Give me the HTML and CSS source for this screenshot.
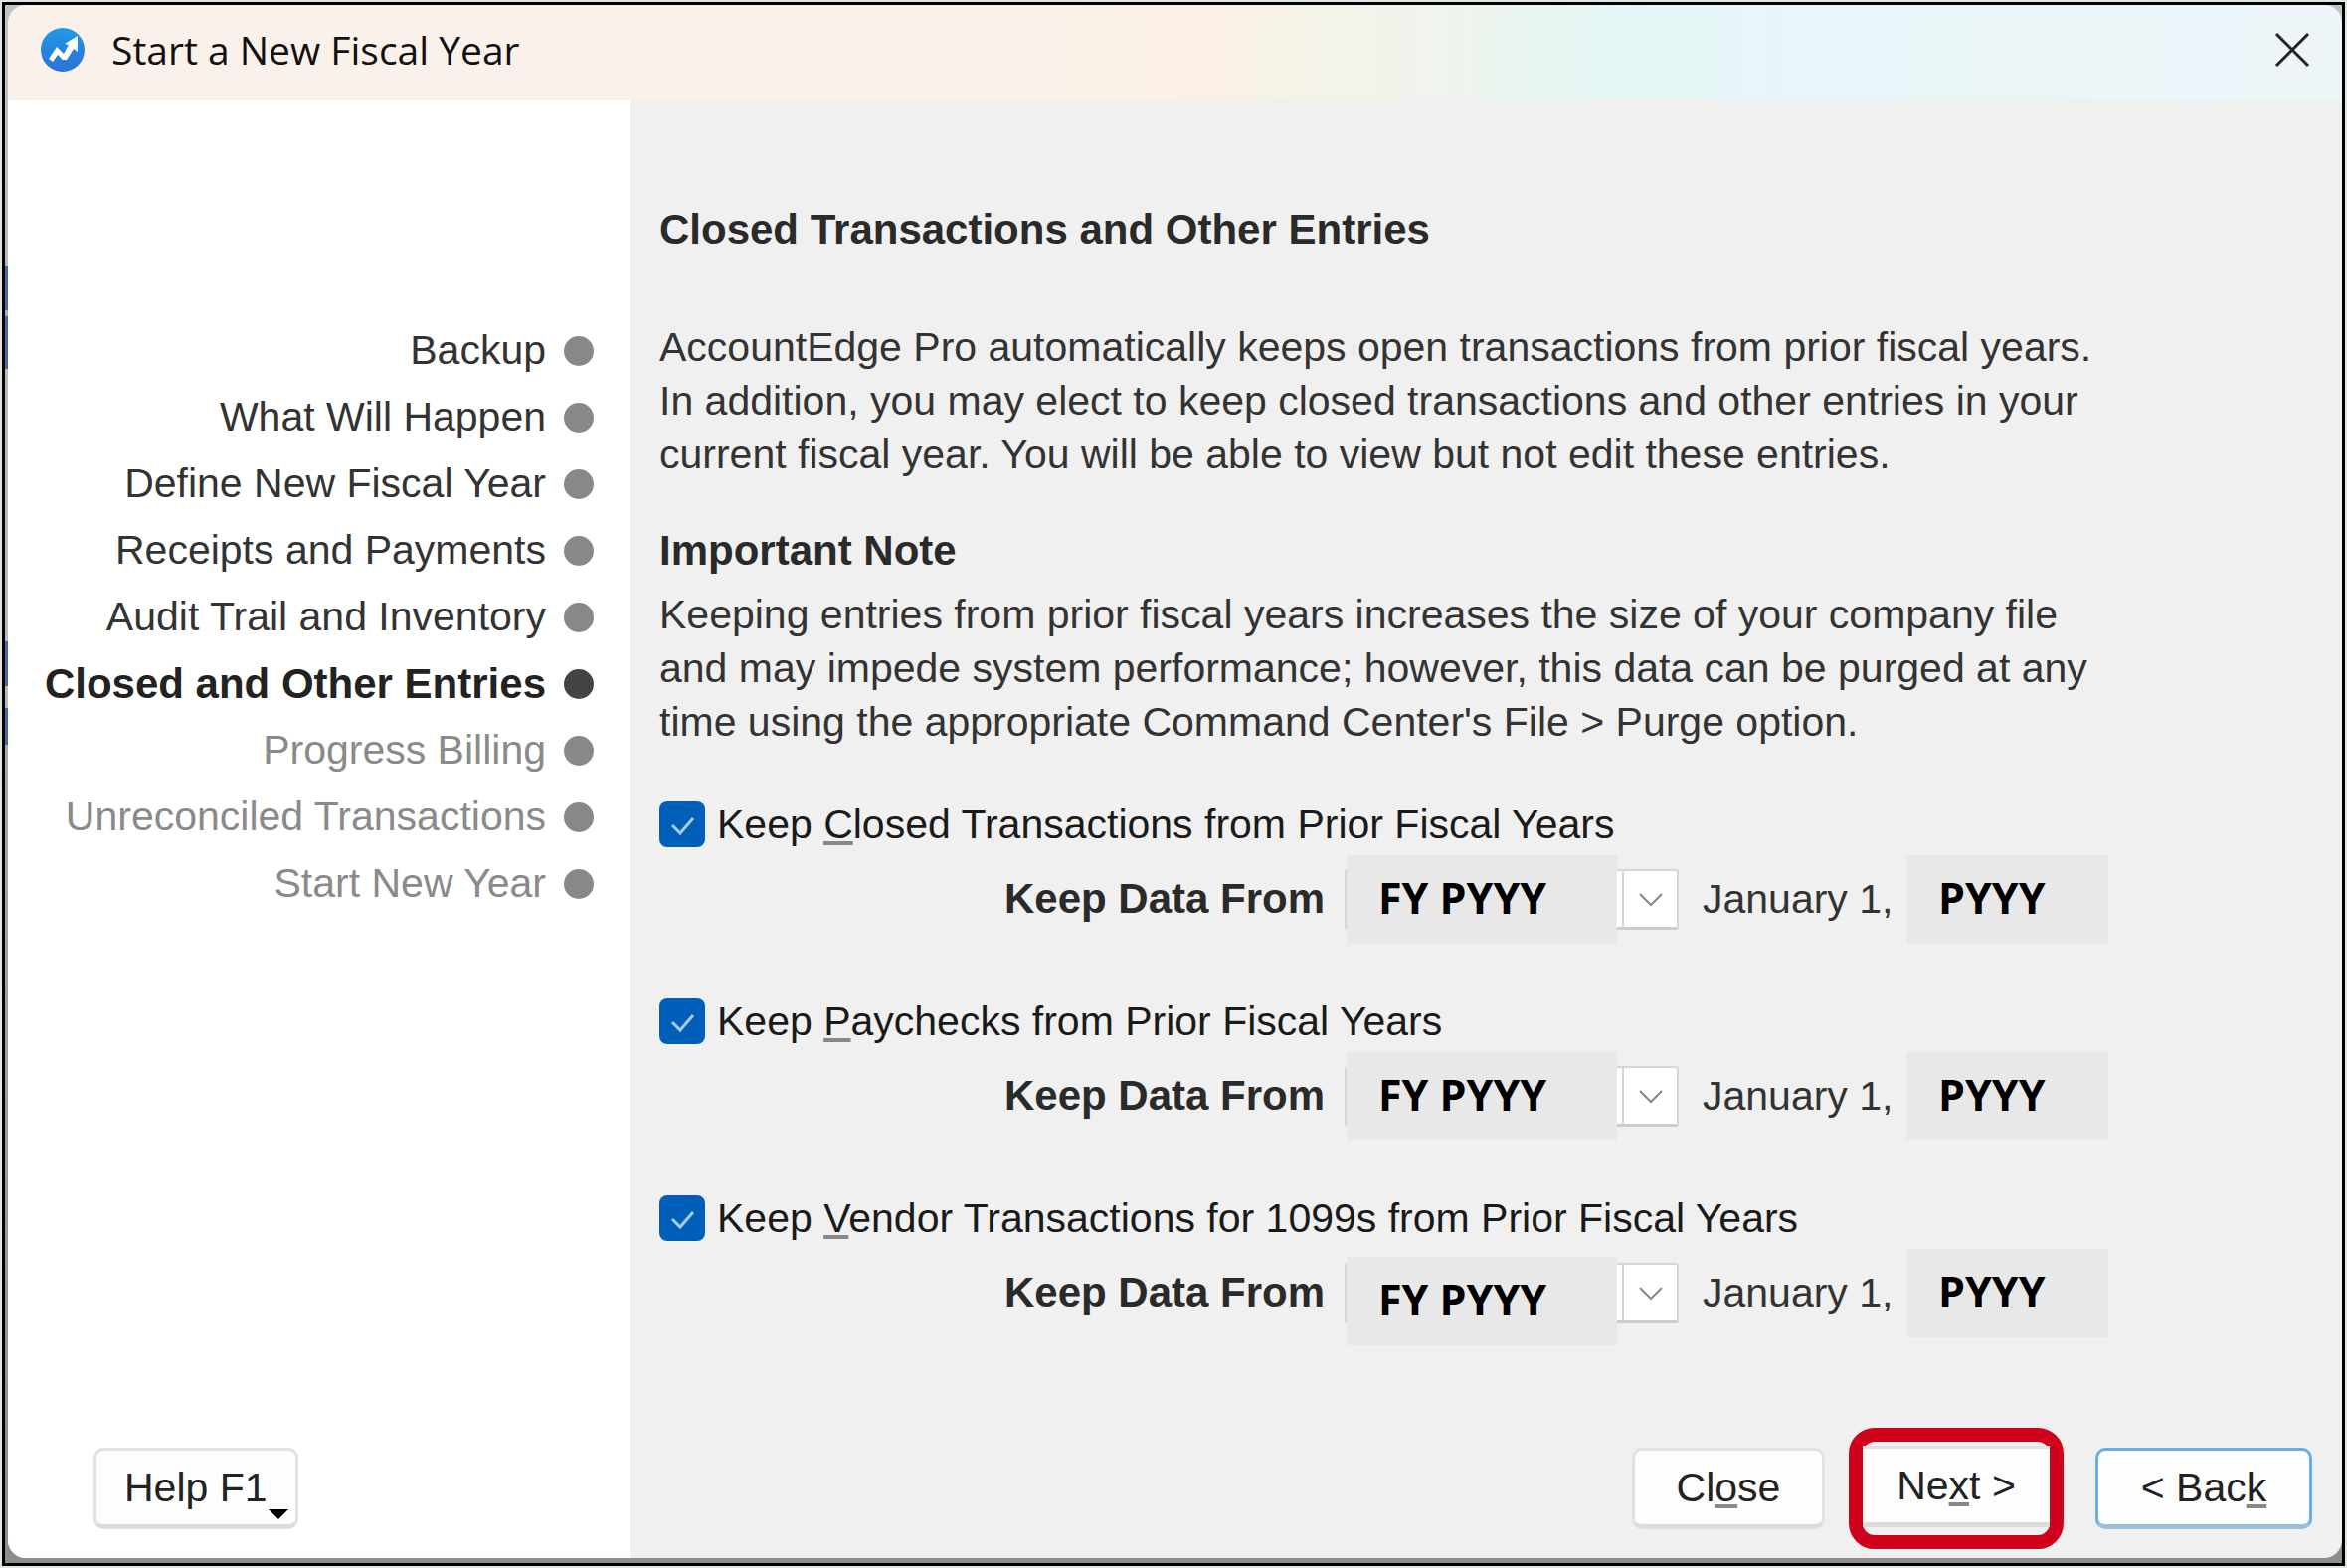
FILE: index.html
```
<!DOCTYPE html>
<html lang="en">
<head>
  <meta charset="UTF-8">
  <title>Start a New Fiscal Year</title>
  <meta name="viewport" content="width=device-width, initial-scale=1.0">
  <link rel="stylesheet" href="styles.css">
</head>
<body>
  <div class="window">
    <header class="titlebar">
      <svg class="logo" viewBox="0 0 46 46" aria-hidden="true">
        <defs>
          <linearGradient id="logoFill" x1="0" y1="0" x2="0" y2="1">
            <stop offset="0" stop-color="#1f9be6"/>
            <stop offset="1" stop-color="#2f6fd6"/>
          </linearGradient>
        </defs>
        <circle cx="23" cy="23" r="22" fill="url(#logoFill)"/>
        <path d="M9 32 L17 20 L24 27 L29 18 L25 17 L38 9 L38 25 L34 22 L27 33 L23 33 L18 28 L13 35 Z" fill="#fff"/>
      </svg>
      <h1>Start a New Fiscal Year</h1>
      <button class="close-x" type="button" aria-label="Close window">
        <svg viewBox="0 0 36 36"><path d="M2 2 L34 34 M34 2 L2 34"/></svg>
      </button>
    </header>

    <div class="content">
      <aside class="sidebar">
        <ol class="steps">
          <li>Backup</li>
          <li>What Will Happen</li>
          <li>Define New Fiscal Year</li>
          <li>Receipts and Payments</li>
          <li>Audit Trail and Inventory</li>
          <li class="current" aria-current="step">Closed and Other Entries</li>
          <li class="pending">Progress Billing</li>
          <li class="pending">Unreconciled Transactions</li>
          <li class="pending">Start New Year</li>
        </ol>
        <button class="btn help" type="button">Help F1</button>
      </aside>

      <main class="panel">
        <h2>Closed Transactions and Other Entries</h2>
        <p>AccountEdge Pro automatically keeps open transactions from prior fiscal years.<br>
          In addition, you may elect to keep closed transactions and other entries in your<br>
          current fiscal year. You will be able to view but not edit these entries.</p>

        <h3>Important Note</h3>
        <p>Keeping entries from prior fiscal years increases the size of your company file<br>
          and may impede system performance; however, this data can be purged at any<br>
          time using the appropriate Command Center's File &gt; Purge option.</p>

        <form class="options">
          <div class="option">
            <div class="check">
              <input type="checkbox" id="keepClosed" checked>
              <svg viewBox="0 0 46 46" aria-hidden="true"><path d="M13 24 L21 32 L34 17"/></svg>
              <label for="keepClosed">Keep <u>C</u>losed Transactions from Prior Fiscal Years</label>
            </div>
            <div class="from">
              <label for="closedFrom">Keep Data From</label>
              <div class="combo">
                <select id="closedFrom"><option></option></select>
                <svg viewBox="0 0 24 14" aria-hidden="true"><path d="M1 1 L12 12 L23 1"/></svg>
                <span class="tag">FY PYYY</span>
              </div>
              <span class="date">January 1,</span>
              <span class="year">PYYY</span>
            </div>
          </div>

          <div class="option">
            <div class="check">
              <input type="checkbox" id="keepPaychecks" checked>
              <svg viewBox="0 0 46 46" aria-hidden="true"><path d="M13 24 L21 32 L34 17"/></svg>
              <label for="keepPaychecks">Keep <u>P</u>aychecks from Prior Fiscal Years</label>
            </div>
            <div class="from">
              <label for="paychecksFrom">Keep Data From</label>
              <div class="combo">
                <select id="paychecksFrom"><option></option></select>
                <svg viewBox="0 0 24 14" aria-hidden="true"><path d="M1 1 L12 12 L23 1"/></svg>
                <span class="tag">FY PYYY</span>
              </div>
              <span class="date">January 1,</span>
              <span class="year">PYYY</span>
            </div>
          </div>

          <div class="option">
            <div class="check">
              <input type="checkbox" id="keepVendor" checked>
              <svg viewBox="0 0 46 46" aria-hidden="true"><path d="M13 24 L21 32 L34 17"/></svg>
              <label for="keepVendor">Keep <u>V</u>endor Transactions for 1099s from Prior Fiscal Years</label>
            </div>
            <div class="from">
              <label for="vendorFrom">Keep Data From</label>
              <div class="combo">
                <select id="vendorFrom"><option></option></select>
                <svg viewBox="0 0 24 14" aria-hidden="true"><path d="M1 1 L12 12 L23 1"/></svg>
                <span class="tag tag-low">FY PYYY</span>
              </div>
              <span class="date">January 1,</span>
              <span class="year">PYYY</span>
            </div>
          </div>
        </form>

        <footer class="actions">
          <button class="btn" type="button">Cl<u>o</u>se</button>
          <div class="highlight"><button class="btn" type="button">Ne<u>x</u>t &gt;</button></div>
          <button class="btn primary" type="button">&lt; Bac<u>k</u></button>
        </footer>
      </main>
    </div>
  </div>
</body>
</html>
```
FILE: styles.css
```
* {
  box-sizing: border-box;
}

body {
  margin: 0;
  padding: 2px;
  height: 100vh;
  background: #dfe5df;
  font-family: "Liberation Sans", Arial, sans-serif;
  font-size: 41px;
  line-height: 54px;
  color: #333;
}

button,
select {
  font: inherit;
  color: inherit;
}

h1,
h2,
h3,
p {
  margin: 0;
}

u {
  text-decoration-thickness: 4px;
  text-decoration-color: #888;
  text-underline-offset: 3px;
  text-decoration-skip-ink: none;
}

/* black outline, desktop showing round the rounded dialog */
.window {
  height: 100%;
  display: flex;
  flex-direction: column;
  border: 3px solid #000;
  padding: 0 0 5px 3px;
  background: linear-gradient(
    #c4c4c4, #bbb 263px,
    #4468a8 263px, #4468a8 307px,
    #aaa 307px, #aaa 313px,
    #4468a8 313px, #4468a8 366px,
    #bbb 366px, #bbb 640px,
    #4468a8 640px, #4468a8 685px,
    #bbb 685px, #bbb 707px,
    #4468a8 707px, #4468a8 744px,
    #aaa 744px, #8c8c8c);
}

.titlebar {
  height: 96px;
  flex: none;
  display: flex;
  align-items: center;
  gap: 26px;
  padding: 0 32px 6px;
  border-radius: 18px 18px 0 0;
  background: linear-gradient(90deg, #faf1eb 42%, #faf0e5 52%, #f6f2e6 54%, #edf4ee 63%, #e3f7f6 69%, #e8f5f9 77%, #eaf5f8 82%, #edf5f9);
}

.logo {
  width: 46px;
  height: 46px;
}

.titlebar h1 {
  flex: 1;
  font-family: "Open Sans", "Noto Sans", sans-serif;
  font-size: 39px;
  font-weight: 400;
  color: #111;
}

.close-x {
  padding: 0;
  border: 0;
  background: none;
  line-height: 0;
}

.close-x svg {
  width: 36px;
  height: 36px;
  fill: none;
  stroke: #222;
  stroke-width: 3;
}

.content {
  flex: 1;
  display: flex;
  border-radius: 0 0 18px 18px;
  overflow: hidden;
  background: #f0f0f0;
}

.sidebar {
  width: 625px;
  flex: none;
  display: flex;
  flex-direction: column;
  align-items: flex-start;
  justify-content: space-between;
  padding: 218px 36px 29px;
  background: #fff;
}

.steps {
  width: 100%;
  margin: 0;
  padding: 0;
  list-style: none;
}

.steps li {
  display: flex;
  align-items: center;
  justify-content: flex-end;
  gap: 18px;
  line-height: 67px;
  white-space: nowrap;
}

.steps li::after {
  content: "";
  width: 30px;
  height: 30px;
  border-radius: 50%;
  background: #888;
}

.steps .current {
  font-size: 42px;
  font-weight: bold;
  color: #222;
}

.steps .current::after {
  background: #444;
}

.steps .pending {
  color: #8a8a8a;
}

.btn {
  min-width: 194px;
  height: 82px;
  padding: 0 28px;
  border: 3px solid #e2e2e2;
  border-bottom: 5px solid #dcdcdc;
  border-radius: 10px;
  background: #fdfdfd;
  color: #222;
}

.help {
  position: relative;
  min-width: 206px;
  margin-left: 50px;
  text-align: left;
}

.help::after {
  content: "";
  position: absolute;
  right: 7px;
  bottom: 5px;
  border: 10px solid transparent;
  border-top-color: #000;
  border-bottom: 0;
}

.panel {
  flex: 1;
  display: flex;
  flex-direction: column;
  padding: 103px 30px 29px 30px;
  white-space: nowrap;
}

.panel h2,
.panel h3 {
  font-size: 42px;
  color: #2a2a2a;
}

.panel h2 {
  margin-bottom: 64px;
}

.panel h3 {
  margin: 43px 0 10px;
}

.options {
  display: flex;
  flex-direction: column;
  gap: 51px;
  margin-top: 49px;
}

.check {
  display: grid;
  grid-template-columns: 46px auto;
  align-items: center;
  justify-content: start;
  column-gap: 12px;
  height: 46px;
  color: #1a1a1a;
}

.check input {
  grid-area: 1 / 1;
  appearance: none;
  width: 46px;
  height: 46px;
  margin: 0;
  border-radius: 8px;
  background: #005fb8;
}

.check svg {
  grid-area: 1 / 1;
  width: 46px;
  height: 46px;
  pointer-events: none;
  fill: none;
  stroke: #a9cbe8;
  stroke-width: 3;
}

.from {
  display: flex;
  align-items: center;
  height: 90px;
  margin-top: 11px;
  padding-left: 347px;
}

.from label {
  width: 342px;
  font-size: 42px;
  font-weight: bold;
  color: #2a2a2a;
}

.combo {
  position: relative;
  width: 336px;
}

.combo select {
  display: block;
  appearance: none;
  width: 100%;
  height: 61px;
  border: 2px solid #d6d6d6;
  border-bottom: 3px solid #ccc;
  border-radius: 3px;
  background: linear-gradient(#d6d6d6, #d6d6d6) right 53px top / 2px 100% no-repeat #fff;
}

.combo svg {
  position: absolute;
  right: 16px;
  top: 24px;
  width: 24px;
  height: 14px;
  pointer-events: none;
  fill: none;
  stroke: #888;
  stroke-width: 2;
}

.tag,
.year {
  height: 89px;
  background: #e8e8e8;
  font: bold 43px/86px "Open Sans", "Noto Sans", sans-serif;
  color: #000;
  padding-left: 32px;
}

.tag {
  position: absolute;
  left: 2px;
  top: -14px;
  width: 272px;
}

.tag-low {
  top: -6px;
}

.date {
  width: 229px;
  padding-left: 24px;
}

.year {
  width: 203px;
}

.actions {
  display: flex;
  align-items: center;
  justify-content: flex-end;
  margin-top: auto;
}

.highlight {
  margin: -20px 32px -20px 24px;
  padding: 4px 0 8px;
  border: 14px solid #d0021b;
  border-radius: 26px;
  line-height: 0;
}

.highlight .btn {
  min-width: 188px;
  border-left: 0;
  border-right: 0;
  border-radius: 0;
}

.primary {
  min-width: 218px;
  border-color: #66b0e8;
  border-bottom-color: #97c0e0;
}
```
